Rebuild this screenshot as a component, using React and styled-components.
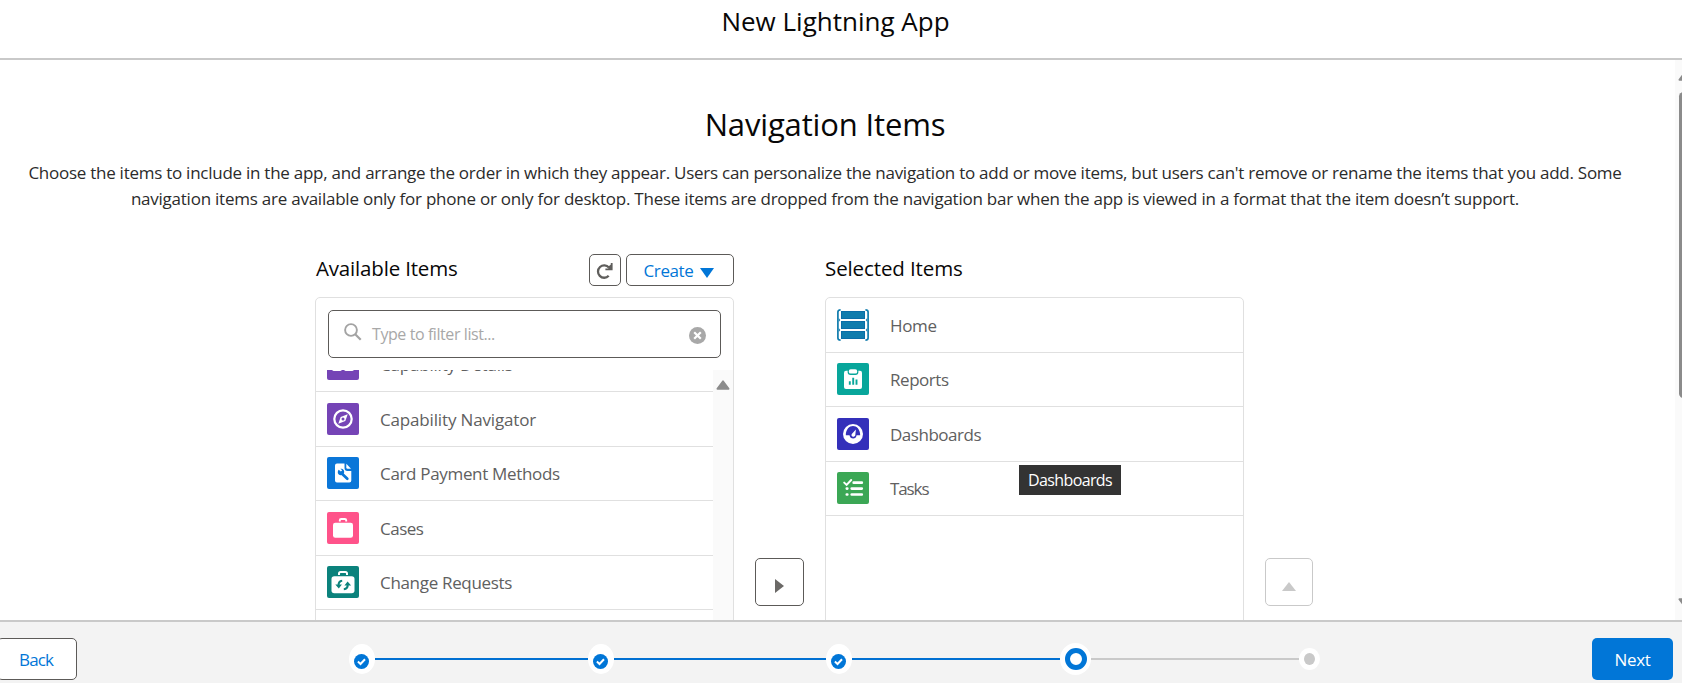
import React from "react";
import styled, { createGlobalStyle } from "styled-components";

const BLUE = "#0176d7";

const GlobalStyle = createGlobalStyle`
  *, *::before, *::after { box-sizing: border-box; }
  html, body { margin: 0; padding: 0; overflow: hidden; background: #fff; }
  body { font-family: "Open Sans", "Noto Sans", sans-serif; color: #181818; }
  button { font: inherit; margin: 0; padding: 0; cursor: pointer; }
  h1, h2, h3, p, ul { margin: 0; padding: 0; font-weight: 400; }
  ul { list-style: none; }
  svg { display: block; flex: none; }
`;

const Page = styled.div`
  display: flex;
  flex-direction: column;
  width: 100%;
  height: 683px;
  overflow: hidden;
`;

const Header = styled.header`
  flex: none;
  height: 60px;
  padding-right: 11px;
  border-bottom: 2px solid #c9c9c9;
  text-align: center;
`;

const Title = styled.h1`
  font-size: 26px;
  line-height: 42px;
  color: #080707;
`;

const Body = styled.div`
  display: flex;
  flex: 1;
  min-height: 0;
  overflow: hidden;
`;

const Content = styled.main`
  flex: 1;
  min-width: 0;
  padding-top: 42px;
`;

const Heading = styled.h2`
  padding-right: 25px;
  text-align: center;
  font-size: 31px;
  line-height: 44px;
  letter-spacing: -0.156px;
  color: #080707;
`;

const Intro = styled.p`
  margin: 14px 0 42px;
  padding-right: 25px;
  text-align: center;
  font-size: 17px;
  line-height: 26px;
  color: #2b2b2b;
`;

const IntroLine = styled.span`
  display: block;
  white-space: nowrap;
  letter-spacing: ${(p) => p.$tracking}px;
`;

const Picker = styled.div`
  display: flex;
  align-items: flex-start;
  gap: 21px;
  padding-left: 315px;
`;

const Column = styled.section`
  width: 419px;
  flex: none;
`;

const ColumnHeader = styled.div`
  display: flex;
  gap: 5px;
  height: 32px;
  margin-bottom: 11px;
`;

const ColumnTitle = styled.h3`
  flex: 1;
  padding-left: ${(p) => p.$indent || 0}px;
  font-size: 20.5px;
  line-height: 28px;
  letter-spacing: ${(p) => p.$tracking}px;
  color: #080707;
`;

const OutlineButton = styled.button`
  display: flex;
  align-items: center;
  justify-content: center;
  width: ${(p) => p.$width}px;
  height: ${(p) => p.$height}px;
  border: 1px solid ${(p) => (p.$muted ? "#c9c9c9" : "#5c5a58")};
  border-radius: 5px;
  background: #fff;
  color: ${BLUE};
  font-size: 17px;
  letter-spacing: -0.4px;
`;

const MenuButton = styled(OutlineButton)`
  gap: 7px;
  padding-right: 2px;

  svg { margin-top: 6px; }
`;

const MoveButton = styled(OutlineButton)`
  flex: none;
  margin-top: 304px;
  padding-top: ${(p) => p.$drop}px;
`;

const Card = styled.div`
  position: relative;
  height: 420px;
  border: 1px solid #e0e0e0;
  border-radius: 5px;
`;

const SearchBox = styled.div`
  display: flex;
  align-items: center;
  height: 48px;
  margin: 12px;
  padding: 0 14px 0 15px;
  border: 1px solid #5c5a58;
  border-radius: 5px;
`;

const Placeholder = styled.span`
  flex: 1;
  margin-left: 10px;
  font-size: 16px;
  letter-spacing: -0.42px;
  color: #a8a8a8;
`;

const SearchGlyph = styled.svg`
  margin-top: -5px;
`;

const ClearGlyph = styled.svg`
  margin-top: 3px;
`;

const ListArea = styled.div`
  display: flex;
  height: 300px;
  overflow: hidden;
`;

const ScrolledRows = styled.ul`
  flex: 1;
  margin-top: -32px;
`;

const ListTrack = styled.div`
  width: 20px;
  padding: 10px 0 0 3px;
  background: #fafafa;
`;

const ItemRow = styled.li`
  display: flex;
  align-items: flex-start;
  height: ${(p) => (p.$tall ? 55 : 54)}px;
  padding: ${(p) => (p.$tall ? 11 : 10)}px 0 0 11px;
  border-bottom: 1px solid #e0e0e0;
`;

const ItemLabel = styled.span`
  margin-left: 21px;
  font-size: 17px;
  line-height: 34px;
  letter-spacing: ${(p) => p.$tracking}px;
  color: #606060;
`;

const Tooltip = styled.div`
  position: absolute;
  left: 193px;
  top: 167px;
  width: 102px;
  height: 30px;
  text-align: center;
  background: #333;
  color: #fff;
  font-size: 16px;
  line-height: 31px;
  letter-spacing: -0.62px;
`;

const PageScrollbar = styled.div`
  flex: none;
  width: 7px;
  overflow: hidden;
  display: flex;
  flex-direction: column;
  padding: 11px 0 12px 3px;
  background: #fafafa;
`;

const Thumb = styled.div`
  flex: none;
  width: 9px;
  height: 306px;
  margin: 11px 0 auto 1px;
  border-radius: 5px;
  background: #8b8b8b;
`;

const Footer = styled.footer`
  flex: none;
  display: flex;
  align-items: flex-start;
  height: 63px;
  padding-right: 9px;
  border-top: 2px solid #c9c9c9;
  background: #f3f3f3;
`;

const BackButton = styled(OutlineButton)`
  margin: 16px 0 0 -3px;
  padding-right: 2px;
  letter-spacing: -0.9px;
`;

const NextButton = styled.button`
  width: 81px;
  height: 42px;
  margin: 16px 0 0 auto;
  border: 0;
  border-radius: 5px;
  background: ${BLUE};
  color: #fff;
  font-size: 17px;
  letter-spacing: -0.3px;
`;

const Progress = styled.div`
  display: flex;
  align-items: center;
  height: 36px;
  margin: 19px 0 0 272px;
`;

const Segment = styled.div`
  width: ${(p) => p.$width}px;
  height: 2px;
  background: ${(p) => (p.$done ? "#0070d2" : "#c9c9c9")};
`;

const Marker = styled.div`
  display: flex;
  align-items: center;
  justify-content: center;
  width: ${(p) => p.$width}px;
  height: ${(p) => p.$height}px;
  border-radius: 50%;
  background: #fff;
`;

const DoneDisk = styled.svg`
  margin: 4px 1px 0 0;
`;

const CurrentRing = styled.div`
  width: 22px;
  height: 22px;
  border: 5px solid ${BLUE};
  border-radius: 50%;
`;

const TodoDot = styled.div`
  width: 11px;
  height: 12px;
  border-radius: 50%;
  background: #c9c9c9;
`;

function Triangle({ dir, width, height, color }) {
  const points = {
    up: `${width / 2},0 ${width},${height} 0,${height}`,
    down: `0,0 ${width},0 ${width / 2},${height}`,
    right: `0,0 ${width},${height / 2} 0,${height}`,
  }[dir];
  return (
    <svg width={width} height={height}>
      <polygon points={points} fill={color} />
    </svg>
  );
}

function RoundedTriangle({ down }) {
  return (
    <svg width="14" height="10" viewBox="0 0 14 10">
      <path
        d="M7 1.3 L12.6 8.8 H1.4 Z"
        transform={down ? "rotate(180 7 5)" : undefined}
        fill="#8b8b8b"
        stroke="#8b8b8b"
        strokeWidth="1.8"
        strokeLinejoin="round"
      />
    </svg>
  );
}

const GLYPHS = {
  details: {
    bg: "#7544b6",
    art: (
      <g fill="none" stroke="#fff" strokeWidth="2">
        <rect x="6" y="7" width="8" height="15" rx="1" />
        <rect x="18" y="7" width="8" height="15" rx="1" />
      </g>
    ),
  },
  navigator: {
    bg: "#7544b6",
    art: (
      <>
        <circle cx="16" cy="16" r="8.7" fill="none" stroke="#fff" strokeWidth="2.2" />
        <path d="M20.7 11.2 L18.3 18 L11.3 20.8 L13.7 14 Z" fill="#fff" />
        <circle cx="16" cy="16" r="1.5" fill="#7544b6" />
      </>
    ),
  },
  card: {
    bg: "#0a76d8",
    art: (
      <>
        <path
          d="M10 6.5 H17.5 V11 Q17.5 14 20.5 14 H24.3 V23.5 Q24.3 25.5 22.3 25.5 H10 Q8 25.5 8 23.5 V8.5 Q8 6.5 10 6.5 Z"
          fill="#fff"
        />
        <path d="M19.3 6.7 L24 11.7 H20.6 Q19.3 11.7 19.3 10.5 Z" fill="#fff" />
        <path d="M14.5 16.2 L20.3 21.8" stroke="#0a76d8" strokeWidth="2.7" strokeLinecap="round" />
        <path
          d="M11.7 12.7 L13.9 14.6 L15.2 13.3 L13.3 11.7 C16.2 11.4 17.8 13.5 17 16 C16 18.6 13 18.9 11.5 17.2 C10.4 15.9 10.6 14 11.7 12.7 Z"
          fill="#0a76d8"
        />
      </>
    ),
  },
  cases: {
    bg: "#ff538a",
    art: (
      <>
        <path
          d="M12.8 9.6 V8.3 Q12.8 7 14.2 7 H17.8 Q19.2 7 19.2 8.3 V9.6"
          fill="none"
          stroke="#fff"
          strokeWidth="1.9"
        />
        <rect x="6" y="10.7" width="20" height="15" rx="2.3" fill="#fff" />
      </>
    ),
  },
  change: {
    bg: "#0b827c",
    art: (
      <>
        <path
          d="M12 9 V7.6 Q12 6 13.6 6 H18.4 Q20 6 20 7.6 V9"
          fill="none"
          stroke="#fff"
          strokeWidth="2"
        />
        <rect x="4.5" y="10.3" width="23" height="17" rx="2.8" fill="#fff" />
        <g fill="none" stroke="#0b827c" strokeWidth="2">
          <path d="M15.2 14.7 C12.4 15 11.4 17 11.6 19.7" />
          <path d="M16.8 23.3 C19.8 23 20.9 21 20.7 18.3" />
        </g>
        <path d="M8.3 18.4 H14.9 L11.8 22.4 Z M17.4 19.6 H24.1 L20.6 15.6 Z" fill="#0b827c" />
      </>
    ),
  },
  reports: {
    bg: "#08a69b",
    art: (
      <>
        <rect x="7" y="7.8" width="18" height="18.2" rx="2" fill="#fff" />
        <rect x="10.6" y="5.4" width="10.8" height="6.6" rx="3" fill="#08a69b" />
        <rect x="11.8" y="6.3" width="8.4" height="4.3" rx="1.9" fill="#fff" />
        <path
          d="M12.8 21.8 V18.2 M16.2 21.8 V14.8 M19.5 21.8 V16.5"
          stroke="#08a69b"
          strokeWidth="1.9"
          strokeLinecap="butt"
        />
      </>
    ),
  },
  dashboards: {
    bg: "#3430ba",
    art: (
      <>
        <circle cx="16" cy="16" r="10" fill="#fff" />
        <path
          d="M8.8 17.2 C8.8 4.8 23.2 4.8 23.2 17.2 H19.6 C19.4 19.2 18 20.5 16.2 20.5 C14.3 20.5 12.8 19.2 12.5 17.2 Z"
          fill="#3430ba"
        />
        <path d="M18.9 11.5 L18.3 17.2 C17.8 19 15.2 19.2 14.6 17.7 C14.3 16.8 14.6 16.2 15 15.7 Z" fill="#fff" />
      </>
    ),
  },
  tasks: {
    bg: "#3ba755",
    art: (
      <g fill="none" stroke="#fff" strokeLinecap="round">
        <path d="M7.2 10.6 L9.6 12.9 L14.2 8" strokeWidth="2" />
        <path d="M16.7 10.7 H24.8 M14.7 16.6 H24.8 M14.7 22.5 H24.8" strokeWidth="2.7" />
        <path d="M9.8 16.6 H10.3 M9.8 22.5 H10.3" strokeWidth="2.7" />
      </g>
    ),
  },
};

function ItemIcon({ name }) {
  if (name === "home") {
    return (
      <svg width="32" height="32" viewBox="0 0 32 32">
        <g fill="#107cad" stroke="#0a6da8" strokeWidth="1">
          <rect x="4.5" y="2.5" width="23" height="7" />
          <rect x="4.5" y="12.5" width="23" height="7" />
          <rect x="4.5" y="22.5" width="23" height="7" />
        </g>
        <g fill="none" stroke="#107cad" strokeWidth="1.7">
          <path d="M3.6 0.9 Q0.9 0.9 0.9 3 V29 Q0.9 31.1 3.6 31.1" />
          <path d="M28.4 0.9 Q31.1 0.9 31.1 3 V29 Q31.1 31.1 28.4 31.1" />
        </g>
        <path d="M1.8 9 L3.2 11 L1.8 13 Z M1.8 19 L3.2 21 L1.8 23 Z M30.2 9 L28.8 11 L30.2 13 Z M30.2 19 L28.8 21 L30.2 23 Z" fill="#107cad" />
      </svg>
    );
  }
  const { bg, art } = GLYPHS[name];
  return (
    <svg width="32" height="32" viewBox="0 0 32 32">
      <rect width="32" height="32" rx="2" fill={bg} />
      {art}
    </svg>
  );
}

const AVAILABLE = [
  { icon: "details", label: "Capability Details", tracking: -0.2 },
  { icon: "navigator", label: "Capability Navigator", tracking: -0.16 },
  { icon: "card", label: "Card Payment Methods", tracking: -0.329 },
  { icon: "cases", label: "Cases", tracking: -0.5 },
  { icon: "change", label: "Change Requests", tracking: -0.32 },
  { icon: "cases", label: "", tracking: 0 },
];

const SELECTED = [
  { icon: "home", label: "Home", tracking: -0.333 },
  { icon: "reports", label: "Reports", tracking: -0.45 },
  { icon: "dashboards", label: "Dashboards", tracking: -0.48 },
  { icon: "tasks", label: "Tasks", tracking: -1.1 },
];

function Item({ item, tall }) {
  return (
    <ItemRow $tall={tall}>
      <ItemIcon name={item.icon} />
      <ItemLabel $tracking={item.tracking}>{item.label}</ItemLabel>
    </ItemRow>
  );
}

function DoneMarker() {
  return (
    <Marker $width={26} $height={30}>
      <DoneDisk width="15" height="15" viewBox="0 0 15 15">
        <circle cx="7.5" cy="7.5" r="7.5" fill={BLUE} />
        <path d="M3.9 7.6 L6.5 10 L11 5.3" fill="none" stroke="#fff" strokeWidth="2" />
      </DoneDisk>
    </Marker>
  );
}

export default function App() {
  return (
    <Page>
      <GlobalStyle />
      <Header>
        <Title>New Lightning App</Title>
      </Header>
      <Body>
        <Content>
          <Heading>Navigation Items</Heading>
          <Intro>
            <IntroLine $tracking={-0.261}>
              Choose the items to include in the app, and arrange the order in which they appear. Users can
              personalize the navigation to add or move items, but users can't remove or rename the items that you
              add. Some
            </IntroLine>
            <IntroLine $tracking={-0.236}>
              navigation items are available only for phone or only for desktop. These items are dropped from the
              navigation bar when the app is viewed in a format that the item doesn’t support.
            </IntroLine>
          </Intro>
          <Picker>
            <Column>
              <ColumnHeader>
                <ColumnTitle $tracking={-0.172} $indent={1}>Available Items</ColumnTitle>
                <OutlineButton $width={32} $height={32} aria-label="Refresh">
                  <svg width="18" height="18" viewBox="0 0 18 18">
                    <path
                      d="M12.7 14.8 A6.2 6.2 0 1 1 12.9 6.5"
                      fill="none"
                      stroke="#5f5e5c"
                      strokeWidth="2.3"
                    />
                    <path d="M15.7 2 V8.3 H9.4" fill="none" stroke="#5f5e5c" strokeWidth="1.8" />
                    <path d="M12.3 5.6 L15.7 3 V8.3 H12.3 Z" fill="#5f5e5c" />
                  </svg>
                </OutlineButton>
                <MenuButton $width={108} $height={32}>
                  <span>Create</span>
                  <Triangle dir="down" width={14} height={10} color={BLUE} />
                </MenuButton>
              </ColumnHeader>
              <Card>
                <SearchBox>
                  <SearchGlyph width="18" height="18" viewBox="0 0 18 18">
                    <circle cx="7" cy="7" r="5.9" fill="none" stroke="#a3a3a3" strokeWidth="1.9" />
                    <path d="M11.2 11.2 L16.7 16.7" stroke="#a3a3a3" strokeWidth="2.2" />
                  </SearchGlyph>
                  <Placeholder>Type to filter list...</Placeholder>
                  <ClearGlyph width="17" height="17" viewBox="0 0 17 17">
                    <circle cx="8.5" cy="8.5" r="8.5" fill="#a8a8a8" />
                    <path d="M5.2 5.2 L11.8 11.8 M11.8 5.2 L5.2 11.8" stroke="#fff" strokeWidth="2.2" />
                  </ClearGlyph>
                </SearchBox>
                <ListArea>
                  <ScrolledRows>
                    {AVAILABLE.map((item, i) => (
                      <Item key={i} item={item} tall={i % 2 === 1} />
                    ))}
                  </ScrolledRows>
                  <ListTrack>
                    <RoundedTriangle />
                  </ListTrack>
                </ListArea>
              </Card>
            </Column>
            <MoveButton $width={49} $height={48} $drop={7} aria-label="Add">
              <Triangle dir="right" width={9} height={14} color="#6b6967" />
            </MoveButton>
            <Column>
              <ColumnHeader>
                <ColumnTitle $tracking={-0.113}>Selected Items</ColumnTitle>
              </ColumnHeader>
              <Card>
                <ul>
                  {SELECTED.map((item, i) => (
                    <Item key={item.label} item={item} tall={i % 2 === 0} />
                  ))}
                </ul>
                <Tooltip>Dashboards</Tooltip>
              </Card>
            </Column>
            <MoveButton $width={48} $height={48} $drop={8} $muted aria-label="Move up">
              <Triangle dir="up" width={14} height={9} color="#c9c9c9" />
            </MoveButton>
          </Picker>
        </Content>
        <PageScrollbar>
          <RoundedTriangle />
          <Thumb />
          <RoundedTriangle down />
        </PageScrollbar>
      </Body>
      <Footer>
        <BackButton $width={80} $height={42}>Back</BackButton>
        <Progress>
          <DoneMarker />
          <Segment $width={213} $done />
          <DoneMarker />
          <Segment $width={212} $done />
          <DoneMarker />
          <Segment $width={208} $done />
          <Marker $width={31} $height={32}>
            <CurrentRing />
          </Marker>
          <Segment $width={208} />
          <Marker $width={21} $height={22}>
            <TodoDot />
          </Marker>
        </Progress>
        <NextButton>Next</NextButton>
      </Footer>
    </Page>
  );
}
